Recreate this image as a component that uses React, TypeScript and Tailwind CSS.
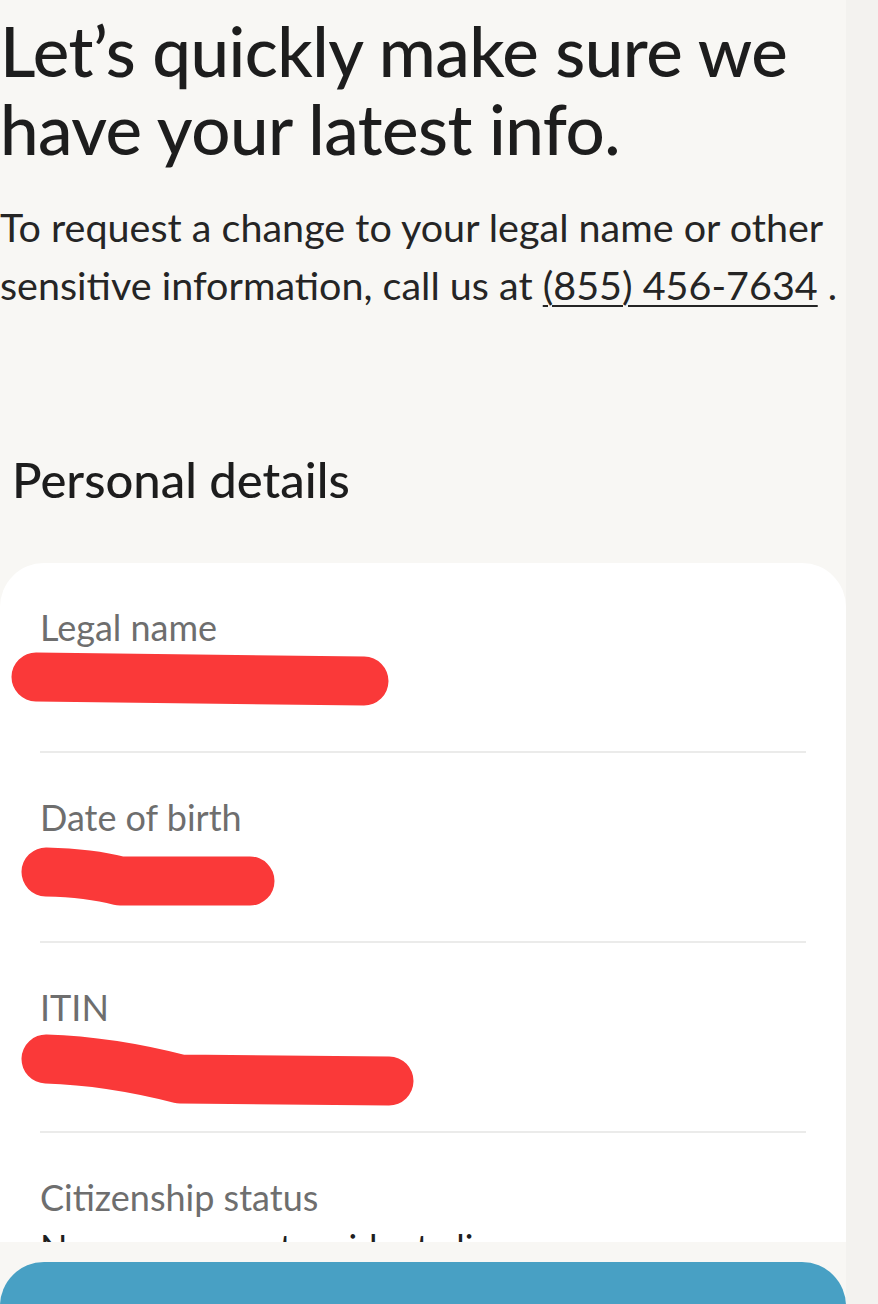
import React from 'react';

const font = { fontFamily: 'Lato, "Open Sans", sans-serif' };

interface FieldProps {
  label: string;
  scribble?: string;
  value?: string;
  last?: boolean;
}

// red marker strokes hiding the values
const Scribble: React.FC<{ d: string }> = ({ d }) => (
  <svg width="460" height="100" viewBox="0 0 460 100" className="absolute -left-[40px] top-0">
    <path d={d} fill="none" stroke="#fa3939" strokeWidth="49" strokeLinecap="round" strokeLinejoin="round" />
  </svg>
);

const Field: React.FC<FieldProps> = ({ label, scribble, value, last }) => (
  <div className={last ? 'pt-[42px]' : 'pt-[42px] border-b-2 border-[#ebebea]'}>
    <div className="text-[36px] leading-[44px] text-[#6e6e6e]">{label}</div>
    <div className="relative h-[102px]">
      {scribble && <Scribble d={scribble} />}
      {value && <div className="pt-[6px] text-[36px] leading-[44px] text-[#1f1f1f]">{value}</div>}
    </div>
  </div>
);

export default function App() {
  return (
    <div className="flex h-[1304px] overflow-hidden bg-[#f8f7f4]" style={font}>
      <div className="flex w-[846px] flex-col">
        <h1 className="pt-[12px] text-[69px] leading-[78px] font-medium tracking-[-0.5px] text-[#1d1d1d]">
          Let’s quickly make sure we have your latest info.
        </h1>
        <p className="mt-[30px] text-[39.5px] leading-[58px] text-[#252525]">
          To request a change to your legal name or other sensitive information, call us at{' '}
          <span className="underline underline-offset-[5px] decoration-2">(855) 456-7634</span>{' '}.
        </p>
        <h2 className="mt-[136px] pl-[12px] text-[49px] leading-[58px] font-medium text-[#1d1d1d]">Personal details</h2>
        <div className="mt-[55px] h-[679px] shrink-0 overflow-hidden rounded-t-[44px] bg-white px-[40px]">
          <Field label="Legal name" scribble="M 36 28 L 364 32" />
          <Field label="Date of birth" scribble="M 46 33 Q 90 34 120 42 L 250 42" />
          <Field label="ITIN" scribble="M 46 30 Q 110 32 180 50 L 389 52" />
          <Field label="Citizenship status" value="Non-permanent resident alien" last />
        </div>
        <div className="mt-[20px] h-[80px] shrink-0 rounded-t-[44px] bg-[#48a0c4]" />
      </div>
      <div className="flex-1 bg-[#f3f2ef]" />
    </div>
  );
}
